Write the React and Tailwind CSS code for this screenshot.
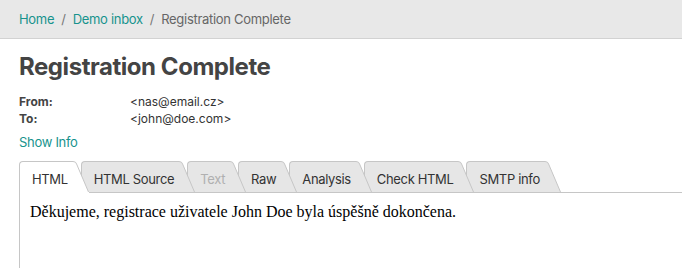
import React from 'react';

const TABS = ['HTML', 'HTML Source', 'Text', 'Raw', 'Analysis', 'Check HTML', 'SMTP info'];

function Tab({ label, active, disabled, index }) {
  const fill = active ? '#ffffff' : '#e6e6e6';
  return (
    <div
      className="relative h-[31px] -mr-[8px] flex items-center"
      style={{ zIndex: active ? 50 : 40 - index }}
    >
      {/* tab shape */}
      <div className="absolute inset-0 flex">
        <div
          className={`flex-1 border-l border-t border-[#c6c6c6] rounded-tl-[4px] ${active ? 'bg-white' : 'bg-[#e6e6e6]'}`}
        />
        <svg width="17" height="31" viewBox="0 0 17 31" className="shrink-0 block">
          <path d="M0 0.5 L1 0.5 Q4 0.5 4.6 3 L16.5 31 L0 31 Z" fill={fill} />
          <path d="M0 0.5 L1 0.5 Q4 0.5 4.6 3 L16.5 31" fill="none" stroke="#c6c6c6" strokeWidth="1" />
        </svg>
        {active && <div className="absolute left-px right-0 -bottom-px h-px bg-white" />}
      </div>
      <span
        className={`relative pt-[7px] pl-[13px] pr-[21px] text-[13px] tracking-[-0.35px] ${disabled ? 'text-[#b0b0b0]' : 'text-[#333]'}`}
      >
        {label}
      </span>
    </div>
  );
}

export default function App() {
  return (
    <div className="w-[682px] h-[268px] overflow-hidden bg-white font-['Inter',sans-serif] text-[#444]">
      {/* Breadcrumb */}
      <div className="h-[39px] bg-[#e8e8e8] border-b border-[#d2d2d2] px-[19px] flex items-center pt-px text-[13px] tracking-[-0.3px]">
        <a className="text-[#17938d]">Home</a>
        <span className="mx-[7px] text-[#777]">/</span>
        <a className="text-[#17938d]">Demo inbox</a>
        <span className="mx-[7px] text-[#777]">/</span>
        <span className="text-[#666]">Registration Complete</span>
      </div>

      <div className="px-[19px]">
        <h1 className="mt-[11px] text-[24px] leading-[34px] font-bold tracking-[-0.45px] text-[#444]">Registration Complete</h1>

        <div className="mt-[9px] text-[12px] leading-[17px] text-[#333]">
          <div className="flex">
            <span className="w-[111px] font-bold text-[#444]">From:</span>
            <span>&lt;nas@email.cz&gt;</span>
          </div>
          <div className="flex">
            <span className="w-[111px] font-bold text-[#444]">To:</span>
            <span>&lt;john@doe.com&gt;</span>
          </div>
        </div>

        <a className="block mt-[5px] text-[13px] leading-[20px] tracking-[-0.3px] text-[#17938d]">Show Info</a>

        {/* Tabs */}
        <div className="mt-[9px] flex items-end">
          {TABS.map((t, i) => (
            <Tab key={t} label={t} index={i} active={i === 0} disabled={t === 'Text'} />
          ))}
        </div>
        <div className="-mr-[19px] h-[80px] border-t border-l border-[#c6c6c6] pl-[10px] pt-[9px]">
          <p className="font-['Liberation_Serif',serif] text-[16px] leading-[20px] text-black">
            Děkujeme, registrace uživatele John Doe byla úspěšně dokončena.
          </p>
        </div>
      </div>
    </div>
  );
}
